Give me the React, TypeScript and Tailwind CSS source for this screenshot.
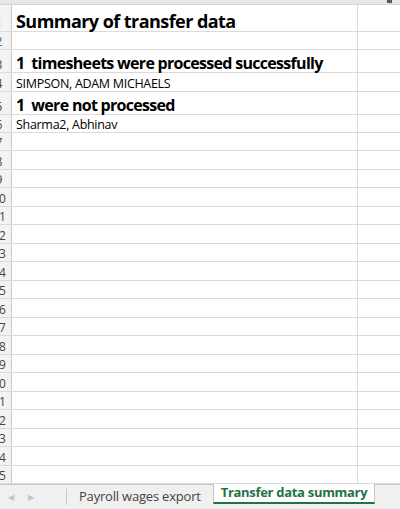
const font = { fontFamily: '"Open Sans", "Liberation Sans", sans-serif' };

type Row = { n: number; h: string; content?: React.ReactNode };

const rows: Row[] = [
  {
    n: 1,
    h: "h-[27px]",
    content: <span className="text-[18px] font-bold tracking-[-0.55px] text-black">Summary of transfer data</span>,
  },
  { n: 2, h: "h-[18px]" },
  {
    n: 3,
    h: "h-[23px]",
    content: (
      <span className="text-[16px] font-bold tracking-[-0.7px] text-black whitespace-pre">1  timesheets were processed successfully</span>
    ),
  },
  {
    n: 4,
    h: "h-[19px]",
    content: <span className="text-[12.5px] tracking-[-0.3px] text-black">SIMPSON, ADAM MICHAELS</span>,
  },
  {
    n: 5,
    h: "h-[23px]",
    content: (
      <span className="text-[16px] font-bold tracking-[-0.7px] text-black whitespace-pre">1  were not processed</span>
    ),
  },
  {
    n: 6,
    h: "h-[18px]",
    content: <span className="text-[12.5px] tracking-[-0.3px] text-black">Sharma2, Abhinav</span>,
  },
];

for (let i = 7; i <= 25; i++) {
  rows.push({ n: i, h: i % 2 === 0 ? "h-[19px]" : "h-[18px]" });
}

export default function App() {
  return (
    <div className="flex h-[509px] w-[400px] flex-col overflow-hidden bg-white" style={font}>
      <div className="relative h-[5px] shrink-0 border-b border-[#d4d4d4] bg-[#e6e6e6]">
        <div className="absolute left-[387px] top-0 h-[3px] w-[5px] bg-[#5a5a5a]" />
      </div>
      <div className="flex flex-1 flex-col">
        {rows.map((r) => (
          <div key={r.n} className={`flex shrink-0 border-b border-[#dadada] ${r.h}`}>
            <div className="w-[12px] shrink-0 overflow-hidden border-r border-[#c8c8c8] bg-[#f3f3f3]">
              <div
                className={`ml-[-14px] flex h-full w-[26px] items-end justify-center pb-[1px] text-[12px] leading-none ${
                  r.n <= 2 ? "text-[#4a6a8a]" : "text-[#444]"
                }`}
              >
                {r.n}
              </div>
            </div>
            <div className="flex w-[346px] shrink-0 items-end overflow-visible whitespace-nowrap border-r border-[#dadada] pb-[1px] pl-[4px] leading-none">
              {r.content}
            </div>
            <div className="flex-1" />
          </div>
        ))}
      </div>
      <div className="flex h-[25px] shrink-0 items-stretch border-t border-[#c6c6c6] bg-[#f0f0f0]">
        <div className="flex w-[66px] items-center gap-[14px] pl-[8px] text-[8px] text-[#c4c4c4]">
          <span>◀</span>
          <span>▶</span>
        </div>
        <div className="my-[4px] w-px bg-[#c6c6c6]" />
        <div className="flex w-[146px] items-center pl-[12px] text-[13px] tracking-[-0.2px] text-[#444]">
          Payroll wages export
        </div>
        <div className="-mt-px mb-[5px] flex w-[162px] items-center justify-center border-x border-b-2 border-[#c6c6c6] border-b-[#217346] bg-white text-[13px] font-bold tracking-[-0.3px] text-[#217346]">
          Transfer data summary
        </div>
        <div className="flex-1" />
      </div>
    </div>
  );
}
